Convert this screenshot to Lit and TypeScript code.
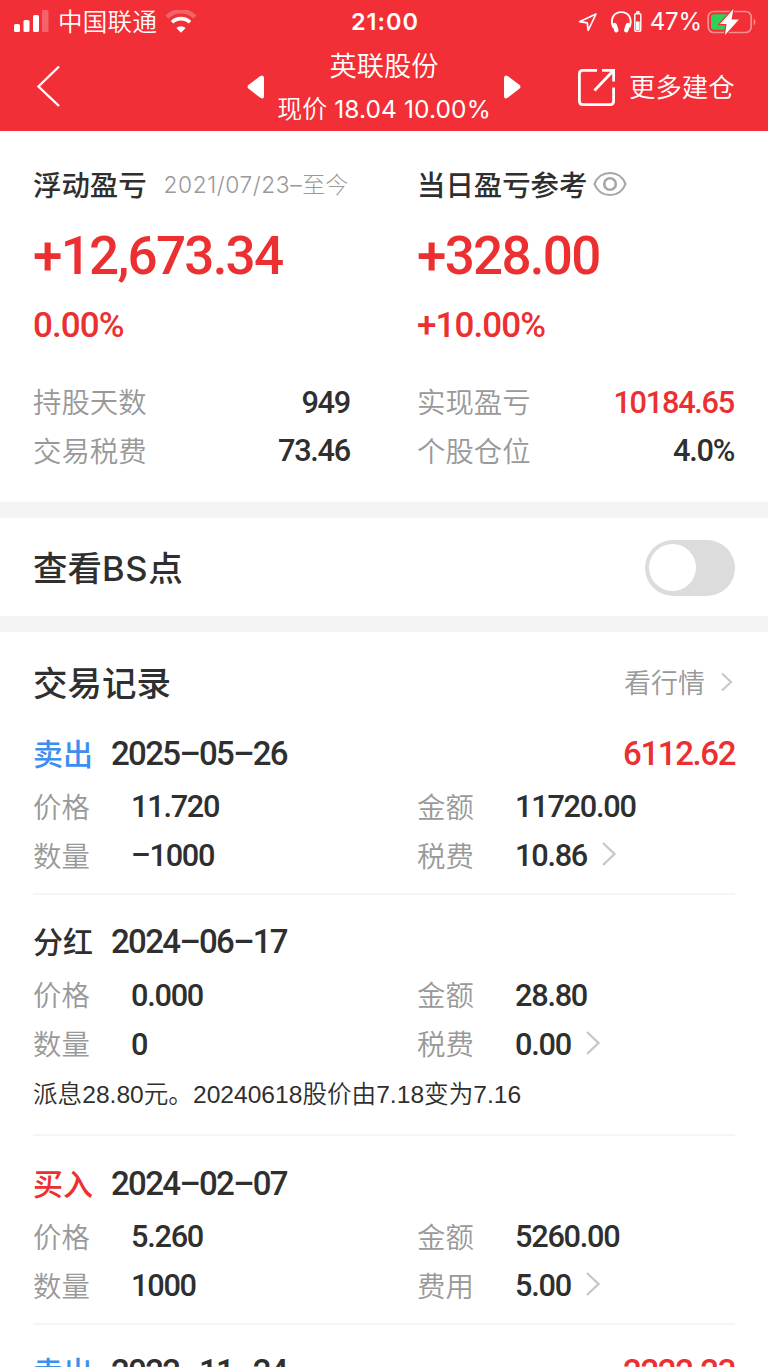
import { LitElement, html, css, nothing } from "lit";
import { customElement, property } from "lit/decorators.js";

const base = css`
  * { box-sizing: border-box; }
  :host {
    font-family: "Noto Sans CJK SC", sans-serif;
    color: #2f2f2f;
  }
  .num {
    font-family: Roboto, "Noto Sans", sans-serif;
    font-weight: 500;
    white-space: nowrap;
  }
  svg { display: block; flex: none; }
  .red { color: #ec2f30; }
`;

interface Trade {
  kind: string;
  tone: string;
  date: string;
  profit?: string;
  price?: string;
  amount?: string;
  count?: string;
  feeLabel?: string;
  fee?: string;
  note?: unknown;
}

const trades: Trade[] = [
  { kind: "卖出", tone: "blue", date: "2025–05–26", profit: "6112.62", price: "11.720", amount: "11720.00", count: "–1000", feeLabel: "税费", fee: "10.86" },
  {
    kind: "分红", tone: "", date: "2024–06–17", price: "0.000", amount: "28.80", count: "0", feeLabel: "税费", fee: "0.00",
    note: html`派息<span class="lat">28.80</span>元。<span class="lat">20240618</span>股价由<span class="lat">7.18</span>变为<span class="lat">7.16</span>`,
  },
  { kind: "买入", tone: "red", date: "2024–02–07", price: "5.260", amount: "5260.00", count: "1000", feeLabel: "费用", fee: "5.00" },
  { kind: "卖出", tone: "blue", date: "2022–11–24", profit: "2222.23" },
];

@customElement("status-bar")
class StatusBar extends LitElement {
  static styles = [base, css`
    :host { display: grid; grid-template-columns: 1fr auto 1fr; align-items: center; height: 43px; padding: 0 11px 0 13px; color: #fff; }
    .side { display: flex; align-items: center; }
    .end { justify-content: flex-end; }
    .carrier { font-size: 24.5px; font-weight: 350; line-height: 41px; margin: 0 8px 2px 9px; letter-spacing: .3px; }
    .time { font: 600 23.5px/43px Inter, sans-serif; letter-spacing: 1px; }
    .pct { font: 400 24px/43px Inter, sans-serif; margin: 0 5px 0 8px; letter-spacing: -.1px; }
    .phones { margin-left: 13px; }
  `];
  render() {
    return html`
      <div class="side">
        <svg width="36" height="24" viewBox="0 0 36 24" fill="#fff">
          <rect x="1" y="14" width="6" height="8" rx="1.6" />
          <rect x="10.5" y="10" width="6" height="12" rx="1.6" />
          <rect x="20" y="5" width="6" height="17" rx="1.6" />
          <rect x="29" y="0" width="6.5" height="22" rx="1.6" opacity=".25" />
        </svg>
        <span class="carrier">中国联通</span>
        <svg width="32" height="24" viewBox="0 0 32 24" fill="none">
          <path d="M2 7a19.800 19.800 0 0 1 28 0" stroke="#fff" stroke-width="4.4" opacity=".25" />
          <path d="M7 12.3a12.8 12.8 0 0 1 18 0" stroke="#fff" stroke-width="3.6" />
          <path d="M16 22.7l-4.6-4.7a6.6 6.6 0 0 1 9.2 0z" fill="#fff" />
        </svg>
      </div>
      <span class="time">21:00</span>
      <div class="side end">
        <svg width="20" height="20" viewBox="0 0 20 20" fill="none" stroke="#fff" stroke-width="1.7" stroke-linejoin="round">
          <path d="M18 2L1.5 9.7l7.8 1.2.8 7.6z" />
        </svg>
        <svg class="phones" width="31" height="24" viewBox="0 0 31 24" fill="none" stroke="#fff">
          <path d="M2.200 17.500C-1.500 8 3.500 2.100 10.300 2.100S22.100 8 18.400 17.500" stroke-width="1.900" />
          <path d="M3.600 15l1.800 5.200M17 15l-1.800 5.200" stroke-width="4.400" stroke-linecap="round" />
          <rect x="23.800" y="3.800" width="6" height="17.400" rx="1" stroke-width="1.400" />
          <path d="M25 2h3.600" stroke-width="1.800" />
          <path d="M26.800 11.500v8.500" stroke-width="3.600" />
        </svg>
        <span class="pct">47%</span>
        <svg width="50" height="26" viewBox="0 0 50 26">
          <rect x="1.200" y="2.500" width="43" height="21" rx="5.500" fill="none" stroke="#fff" stroke-width="1.700" opacity=".45" />
          <path d="M46.700 9.500a4.300 4.300 0 0 1 0 7z" fill="#fff" opacity=".45" />
          <rect x="4" y="5.200" width="18" height="15.500" rx="3" fill="#30d158" />
          <path d="M26.500 0L13 15h6.500L18 26l14-15.500h-7.500z" fill="#fff" stroke="#f22f37" stroke-width="2.400" paint-order="stroke" />
        </svg>
      </div>
    `;
  }
}

@customElement("nav-header")
class NavHeader extends LitElement {
  static styles = [base, css`
    :host { display: grid; grid-template-columns: 246px 276px 1fr; align-items: center; height: 88px; color: #fff; font-weight: 350; }
    .back { margin: 0 0 3px 36px; }
    .middle { display: flex; justify-content: space-between; align-items: center; height: 86px; }
    .title { display: flex; flex-direction: column; align-items: center; }
    .name { font-size: 27.200px; line-height: 45px; }
    .price { font-size: 25px; line-height: 41px; white-space: nowrap; margin-bottom: 2px; }
    .lat { font-family: Inter, sans-serif; font-weight: 400; font-size: 24.500px; letter-spacing: .1px; }
    .more { display: flex; align-items: center; margin-left: 55px; }
    .label { font-size: 26.400px; line-height: 84px; margin: 0 0 2px 13px; white-space: nowrap; }
  `];
  render() {
    return html`
      <svg class="back" width="26" height="42" viewBox="0 0 26 42" fill="none" stroke="#fff" stroke-width="2.400">
        <path d="M23 1.500L2.500 21.500 23 41" />
      </svg>
      <div class="middle">
        <svg width="18" height="24" viewBox="0 0 18 24" fill="#fff"><path d="M14 1.200Q18 -1 18 3v18q0 4-4 1.600L3 14Q0 11.500 3 9.500z" /></svg>
        <div class="title">
          <span class="name">英联股份</span>
          <span class="price">现价<span class="lat"> 18.04 10.00%</span></span>
        </div>
        <svg width="18" height="24" viewBox="0 0 18 24" fill="#fff"><path d="M4 1.200Q0 -1 0 3v18q0 4 4 1.600L15 14Q18 11.500 15 9.500z" /></svg>
      </div>
      <div class="more">
        <svg width="39" height="39" viewBox="0 0 39 39" fill="none" stroke="#fff" stroke-width="2.800">
          <path d="M20 2.400H6Q2.400 2.400 2.400 6V33Q2.400 36.600 6 36.600H33Q36.600 36.600 36.600 33V19.500" />
          <path d="M25 2.400H36.600V13.500M36 3L17.500 22.500" />
        </svg>
        <span class="label">更多建仓</span>
      </div>
    `;
  }
}

@customElement("profit-summary")
class ProfitSummary extends LitElement {
  static styles = [base, css`
    :host { display: grid; grid-template-columns: 317px 317px; column-gap: 67px; padding: 31px 33px 0; height: 371px; background: #fff; }
    .head { display: flex; align-items: center; height: 46px; padding-bottom: 3px; font-size: 28.400px; font-weight: 500; white-space: nowrap; }
    .range { font-size: 23px; font-weight: 300; color: #999; margin: 0 0 2px 17px; }
    .lat { font-family: Inter, sans-serif; font-weight: 300; font-size: 22.800px; letter-spacing: .55px; }
    .eye { margin: 1px 0 0 6px; }
    .big { font-size: 53px; line-height: 96px; letter-spacing: -1.750px; }
    .pct { font-size: 35px; line-height: 44px; letter-spacing: -.900px; }
    .rows { padding-top: 30px; }
    .row { display: flex; justify-content: space-between; align-items: center; height: 48.600px; padding-bottom: 3px; font-size: 28.400px; font-weight: 350; color: #999; }
    .row .num { margin-top: 3px; font-size: 30.700px; color: #2f2f2f; letter-spacing: -1.250px; }
    .row .red { color: #ec2f30; }
  `];
  render() {
    return html`
      <section>
        <div class="head">浮动盈亏<span class="range"><span class="lat">2021/07/23–</span>至今</span></div>
        <div class="num big red">+12,673.34</div>
        <div class="num pct red">0.00%</div>
        <div class="rows">
          <div class="row">持股天数<span class="num">949</span></div>
          <div class="row">交易税费<span class="num">73.46</span></div>
        </div>
      </section>
      <section>
        <div class="head">当日盈亏参考
          <svg class="eye" width="34" height="26" viewBox="0 0 34 26" fill="none" stroke="#a6a6a6" stroke-width="2.200">
            <path d="M1.500 13C4 6 10 2 17 2s13 4 15.500 11C30 20 24 24 17 24S4 20 1.500 13z" />
            <circle cx="17" cy="13" r="5.800" stroke-width="2.600" />
          </svg>
        </div>
        <div class="num big red">+328.00</div>
        <div class="num pct red">+10.00%</div>
        <div class="rows">
          <div class="row">实现盈亏<span class="num red">10184.65</span></div>
          <div class="row">个股仓位<span class="num">4.0%</span></div>
        </div>
      </section>
    `;
  }
}

@customElement("bs-switch")
class BsSwitch extends LitElement {
  static styles = [base, css`
    :host { display: flex; justify-content: space-between; align-items: center; height: 98px; padding: 0 33px; background: #fff; }
    .label { font-size: 34.500px; font-weight: 500; line-height: 96px; }
    .lat { font-family: Inter, sans-serif; font-weight: 500; font-size: 34.500px; letter-spacing: .7px; }
    .track { display: flex; align-items: center; width: 90px; height: 56px; padding: 4px; border-radius: 28px; background: #dcdcdc; margin-top: 1px; }
    .knob { width: 47px; height: 47px; border-radius: 50%; background: #fff; }
  `];
  render() {
    return html`
      <span class="label">查看<span class="lat">BS</span>点</span>
      <span class="track"><span class="knob"></span></span>
    `;
  }
}

@customElement("trade-item")
class TradeItem extends LitElement {
  @property({ attribute: false }) trade!: Trade;
  static styles = [base, css`
    :host { display: block; margin: 0 33px; border-bottom: 2px solid #f5f5f5; padding: 17.500px 0 12.700px; }
    .head { display: flex; align-items: center; height: 59px; }
    .kind { font-size: 30px; font-weight: 500; width: 78px; margin-bottom: 3px; }
    .blue { color: #3e8ef0; }
    .head .num { font-size: 33px; letter-spacing: -1.650px; }
    .head .profit { margin: 0 0 0 auto; letter-spacing: -1.400px; }
    .row { display: grid; grid-template-columns: 98px 286px 98px 1fr; align-items: center; height: 48.700px; padding-bottom: 3px; font-size: 28.400px; font-weight: 350; color: #999; }
    .row .num { display: flex; align-items: center; margin-top: 3px; font-size: 30.700px; letter-spacing: -1.250px; color: #2f2f2f; }
    .go { margin: -3px 0 0 14px; }
    .note { font-size: 24.600px; line-height: 48px; padding-bottom: 2px; font-weight: 350; white-space: nowrap; }
    .lat { font-family: "Liberation Sans", sans-serif; font-weight: 400; }
  `];
  render() {
    const t = this.trade;
    return html`
      <div class="head">
        <span class="kind ${t.tone}">${t.kind}</span>
        <span class="num">${t.date}</span>
        ${t.profit ? html`<span class="num profit red">${t.profit}</span>` : nothing}
      </div>
      ${t.price ? html`
      <div class="row"><span>价格</span><span class="num">${t.price}</span><span>金额</span><span class="num">${t.amount}</span></div>
      <div class="row"><span>数量</span><span class="num">${t.count}</span><span>${t.feeLabel}</span>
        <span class="num">${t.fee}
          <svg class="go" width="16" height="26" viewBox="0 0 16 26" fill="none" stroke="#c8c8c8" stroke-width="2.400"><path d="M2 2l11.500 11L2 24" /></svg>
        </span>
      </div>` : nothing}
      ${t.note ? html`<div class="note">${t.note}</div>` : nothing}
    `;
  }
}

@customElement("app-root")
class AppRoot extends LitElement {
  static styles = [base, css`
    :host { display: flex; flex-direction: column; height: 1367px; overflow: hidden; background: #f4f4f4; }
    .top { background: #f22f37; flex: none; height: 131px; }
    profit-summary, bs-switch { flex: none; }
    bs-switch { margin: 16px 0; }
    .records { flex: 1 0 auto; background: #fff; }
    .bar { display: flex; justify-content: space-between; align-items: center; height: 74px; padding: 26px 35px 0 33px; }
    .heading { font-size: 34.500px; font-weight: 500; line-height: 44px; margin-bottom: 3px; }
    .link { display: flex; align-items: center; font-size: 27px; font-weight: 350; color: #999; line-height: 40px; }
    .arrow { margin: 0 0 0 15px; }
  `];
  render() {
    return html`
      <div class="top"><status-bar></status-bar><nav-header></nav-header></div>
      <profit-summary></profit-summary>
      <bs-switch></bs-switch>
      <div class="records">
        <div class="bar">
          <span class="heading">交易记录</span>
          <span class="link">看行情
            <svg class="arrow" width="13" height="20" viewBox="0 0 13 20" fill="none" stroke="#c8c8c8" stroke-width="2.200"><path d="M2 1.500l9 8.500-9 8.500" /></svg>
          </span>
        </div>
        ${trades.map((t) => html`<trade-item .trade=${t}></trade-item>`)}
      </div>
    `;
  }
}
